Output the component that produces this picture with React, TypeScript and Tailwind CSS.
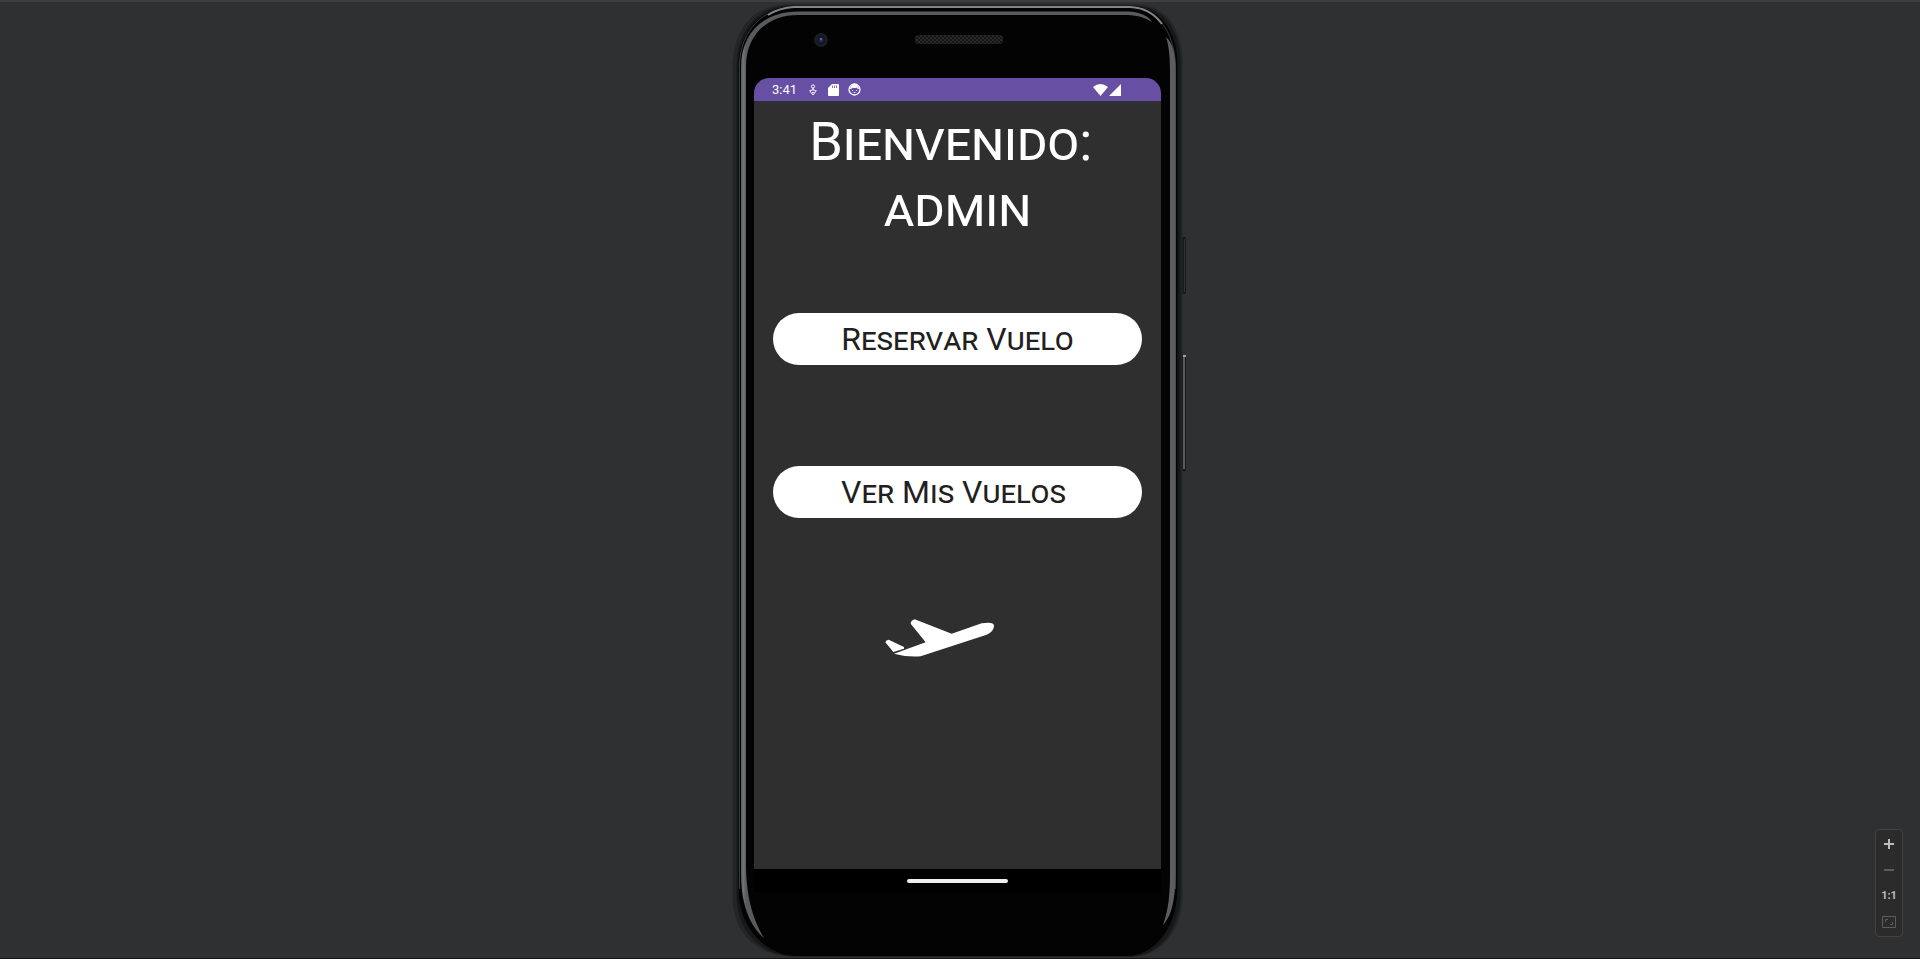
function PhoneShell() {
  return (
    <svg className="absolute inset-0 h-full w-full" viewBox="0 0 456 954" fill="none" aria-hidden="true">
      <defs>
        <linearGradient id="leftEdge" x1="0" x2="14" y1="0" y2="0" gradientUnits="userSpaceOnUse" spreadMethod="pad">
          <stop offset="0.6" stopColor="#505153" />
          <stop offset="0.8" stopColor="#747577" />
          <stop offset="1" stopColor="#5a5b5d" />
        </linearGradient>
        <pattern id="mesh" width="4" height="4" patternUnits="userSpaceOnUse">
          <rect width="4" height="4" fill="#161616" />
          <circle cx="1" cy="1" r="1" fill="#2f2f2f" />
          <circle cx="3" cy="3" r="1" fill="#2f2f2f" />
        </pattern>
      </defs>
      <rect x="449" y="234" width="5" height="57" rx="1" fill="#191a1b" />
      <rect x="452" y="236" width="1" height="53" fill="#303133" />
      <rect x="450" y="352" width="4" height="116" rx="1" fill="#191a1b" />
      <rect x="451" y="352" width="2" height="114" fill="#5b5a59" />
      <rect x="451" y="352" width="3" height="2" fill="#a0a0a0" />
      <path d="M53 1.500H405C434 3 449.500 24 450.500 58V894C449.500 928 429 953.500 400 953.500H62C30 953.500 1.500 935 0.500 895V64C1.500 26 20 4 53 1.500Z" fill="#242526" />
      <path d="M56 2.500H402C432 4 447.500 25 448.500 60V892C447.500 927 427 953.500 398 953.500H64C32 953.500 5.500 932 4.500 893V62C5.500 27 26 4 56 2.500Z" fill="#171819" />
      <path d="M62 3H398C427 4 445 26 445.500 62V888C444 926 422 953 394 953H66C36 953 8 928 6.500 888V62C7.500 25 32 4 62 3Z" fill="#030303" />
      <path d="M7.500 886V62C8.500 26 32 5 62 4H398C425 5 442 28 443.500 62V886" stroke="#3a3b3c" strokeWidth="1" />
      <path d="M36 12C44 7 52 4.500 62 4H398C410 4.500 422 10 430 21" stroke="#858587" strokeWidth="2" />
      <path d="M9 870V64C9 30 32 8.500 66 8.500H396C408 9 417 13 420 19C411 13 402 12 392 12H66C35 12 14 32 14 64V866C15 898 22 918 32 935C17 922 9 900 9 870Z" fill="url(#leftEdge)" />
      <path d="M434 34C441 40 443.500 52 443.500 66V868C443.500 892 441 912 431 922C437 905 438 890 438 868V70C438 54 437 43 434 34Z" fill="#5d5d5f" />
      <circle cx="89" cy="37" r="7" fill="#1c1d20" />
      <circle cx="89" cy="37" r="4" fill="#14162c" />
      <circle cx="89" cy="37" r="2" fill="#28306a" />
      <circle cx="89" cy="36" r="1" fill="#6874a4" />
      <rect x="183" y="32" width="88" height="9" rx="4" fill="url(#mesh)" />
    </svg>
  );
}

function StatusBar() {
  return (
    <div className="flex h-[23px] items-center justify-between rounded-t-[15px] bg-[#674fa3] pl-[18px] pr-10 text-white">
      <div className="flex items-center">
        <span className="w-[37px] text-[13px] leading-[23px]">3:41</span>
        <svg className="h-3 w-2" viewBox="0 0 8 12" fill="none" stroke="currentColor" aria-hidden="true">
          <circle cx="4" cy="2.500" r="1.600" />
          <path d="M4 4V6.500M0.500 6.500L4 11L7.500 6.500M1 7L4 5.500L7 7" />
          <path d="M3 8L4 9L5 8" />
        </svg>
        <svg className="ml-[11px] h-3 w-[11px]" viewBox="0 0 11 12" aria-hidden="true">
          <path d="M4 0H10Q11 0 11 1V11Q11 12 10 12H1Q0 12 0 11V4Z" fill="currentColor" />
          <path d="M4.500 1.500V4M6.500 1.500V4M8.500 1.500V4" stroke="#674fa3" strokeWidth="0.800" />
        </svg>
        <svg className="ml-[9px] h-[13px] w-[13px]" viewBox="0 0 13 13" fill="none" aria-hidden="true">
          <circle cx="6.500" cy="6.500" r="5.500" stroke="currentColor" strokeWidth="1.300" />
          <path d="M2 6C3 6 4 5.500 4.500 4.500Q6.500 5.500 8.500 4.500Q9.500 6 11 6Q11 2 6.500 1Q2 2 2 6Z" fill="currentColor" />
          <path d="M4 7.500H5M8 7.500H9M5.500 9.500H7.500" stroke="currentColor" strokeWidth="0.800" />
        </svg>
      </div>
      <div className="flex items-center gap-px">
        <svg className="h-3 w-[15px]" viewBox="0 0 15 12" fill="currentColor" aria-hidden="true">
          <path d="M0 3Q7.500 -3 15 3L7.500 12Z" />
        </svg>
        <svg className="h-3 w-3" viewBox="0 0 12 12" fill="currentColor" aria-hidden="true">
          <path d="M12 0V12H0Z" />
        </svg>
      </div>
    </div>
  );
}

function ActionButton({ label }: { label: string }) {
  return (
    <button
      type="button"
      className="block h-[52px] w-full whitespace-pre rounded-full bg-white text-center text-[32px] leading-[52px] text-[#231f20] [font-variant:small-caps]"
    >
      {label}
    </button>
  );
}

function Phone() {
  return (
    <section className="relative mt-[3px] w-[456px] pb-[65px] pl-[22px] pr-[27px] pt-[75px] font-[Roboto,sans-serif]">
      <PhoneShell />
      <div className="relative">
        <StatusBar />
        <div className="flex h-[768px] flex-col bg-[#2f2f2f] px-[19px]">
          <h1 className="pt-2 text-center text-[54px] leading-[66px] text-white [font-variant:small-caps]">
            <span className="block whitespace-nowrap">{"Bienvenido:\u00a0"}</span>
            <span className="block">admin</span>
          </h1>
          <div className="mt-[72px] flex flex-col gap-[101px]">
            <ActionButton label="Reservar Vuelo" />
            <ActionButton label={"Ver Mis Vuelos\u00a0"} />
          </div>
          <svg className="ml-[112px] mt-[101px] h-[38px] w-[110px]" viewBox="75 58 330 114" fill="#fff" aria-hidden="true">
            <path d="M102 162L197 128L152 72Q153 62 164 59L275 102L365 71Q402 65 402 78Q402 95 380 105L182 170Q140 173 102 162Z" />
            <path d="M76 128Q78 120 86 120L132 142V147L100 157Z" />
          </svg>
        </div>
        <div className="flex h-[23px] items-center justify-center bg-black">
          <div className="h-1 w-[101px] rounded-full bg-[#efefef]" />
        </div>
      </div>
    </section>
  );
}

function ZoomControls() {
  const item = "flex h-[26px] w-full items-center justify-center";
  return (
    <div className="absolute bottom-[21px] right-[17px] flex w-7 flex-col rounded border border-[#414345] bg-[#2b2b2b] py-px text-[#bcbcbc]">
      <button type="button" aria-label="Zoom in" className={item}>
        <svg className="h-[10px] w-[10px]" viewBox="0 0 10 10" fill="currentColor">
          <path d="M4 0H6V4H10V6H6V10H4V6H0V4H4Z" />
        </svg>
      </button>
      <button type="button" aria-label="Zoom out" className={item}>
        <svg className="h-[2px] w-[10px]" viewBox="0 0 10 2" fill="#5c5d5e">
          <path d="M0 0H10V2H0Z" />
        </svg>
      </button>
      <button type="button" className={`${item} font-[Roboto,sans-serif] text-[11px] font-bold`}>
        1:1
      </button>
      <button type="button" aria-label="Fit to screen" className={item}>
        <svg className="h-3 w-[14px]" viewBox="0 0 14 12" fill="none" stroke="#5c5d5e">
          <path d="M0.500 0.500H13.500V11.500H0.500Z" />
          <path d="M3.500 6V3.500H6M8 8.500H10.500V6" />
        </svg>
      </button>
    </div>
  );
}

export default function App() {
  return (
    <main className="relative flex min-h-screen flex-col items-center border-b border-[#141414] bg-[#2e3032]">
      <div className="absolute inset-x-0 top-0 h-[2px] bg-[#3c3e41]" />
      <Phone />
      <ZoomControls />
    </main>
  );
}
